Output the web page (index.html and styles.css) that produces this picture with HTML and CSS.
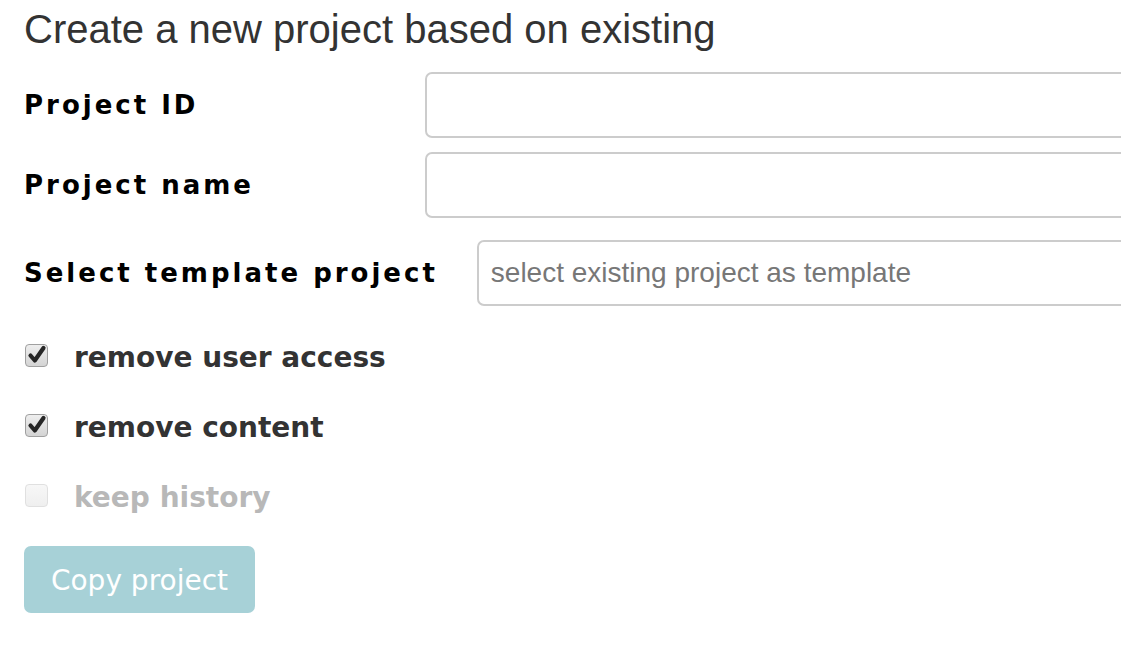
FILE: index.html
```html
<!DOCTYPE html>
<html>
<head>
<meta charset="utf-8">
<link rel="stylesheet" href="styles.css">
</head>
<body>
<div class="page">
  <h1 class="title">Create a new project based on existing</h1>
  <form class="form">
    <div class="field">
      <label class="field-label">Project ID</label>
      <input class="field-input" type="text">
    </div>
    <div class="field field-second">
      <label class="field-label">Project name</label>
      <input class="field-input" type="text">
    </div>
    <div class="field field-template">
      <label class="field-label">Select template project</label>
      <input class="field-input" type="text" placeholder="select existing project as template">
    </div>
    <div class="check-row check-first">
      <span class="checkbox checked"><svg viewBox="0 0 22 22" width="22" height="22"><path d="M4.5 11.5 L8.8 16.5 L17.5 4" fill="none" stroke="#262626" stroke-width="4.2" stroke-linecap="round" stroke-linejoin="round"/></svg></span>
      <span class="check-label">remove user access</span>
    </div>
    <div class="check-row">
      <span class="checkbox checked"><svg viewBox="0 0 22 22" width="22" height="22"><path d="M4.5 11.5 L8.8 16.5 L17.5 4" fill="none" stroke="#262626" stroke-width="4.2" stroke-linecap="round" stroke-linejoin="round"/></svg></span>
      <span class="check-label">remove content</span>
    </div>
    <div class="check-row disabled">
      <span class="checkbox"></span>
      <span class="check-label">keep history</span>
    </div>
    <button class="btn" type="button">Copy project</button>
  </form>
</div>
</body>
</html>
```
FILE: styles.css
```css
html, body {
  margin: 0;
  padding: 0;
  background: #fff;
  overflow: hidden;
}
.page {
  width: 1121px;
  height: 651px;
  overflow: hidden;
  padding-left: 24px;
  box-sizing: border-box;
}
.title {
  margin: 5px 0 0 0;
  font-family: "Liberation Sans", Arial, sans-serif;
  font-weight: normal;
  font-size: 40px;
  line-height: 48px;
  color: #333;
}
.form {
  margin-top: 19px;
}
.field {
  display: flex;
  align-items: center;
  height: 66px;
}
.field-second {
  margin-top: 14px;
}
.field-template {
  margin-top: 22px;
}
.field-label {
  flex: 0 0 auto;
  min-width: 362px;
  margin-right: 39px;
  font-family: "DejaVu Sans", Verdana, sans-serif;
  font-weight: bold;
  font-size: 26px;
  letter-spacing: 3px;
  color: #000;
}
.field-input {
  flex: 0 0 auto;
  width: 900px;
  height: 66px;
  box-sizing: border-box;
  border: 2px solid #ccc;
  border-radius: 7px;
  padding: 0 12px;
  font-family: "Liberation Sans", Arial, sans-serif;
  font-size: 28px;
  color: #555;
  background: #fff;
  outline: none;
}
.field-input::placeholder {
  color: #777;
}
.check-row {
  display: flex;
  align-items: center;
  height: 40px;
  margin-top: 30px;
}
.check-first {
  margin-top: 31px;
}
.checkbox {
  flex: 0 0 auto;
  width: 23px;
  height: 23px;
  box-sizing: border-box;
  margin-left: 1px;
  margin-right: 26px;
  margin-top: -3px;
  border: 1px solid #a0a0a0;
  border-radius: 4px;
  background: linear-gradient(#eeeeee, #d4d4d4);
  position: relative;
}
.checkbox svg {
  position: absolute;
  left: 0;
  top: -1px;
}
.disabled .checkbox {
  border-color: #e0e0e0;
  background: linear-gradient(#f7f7f7, #efefef);
}
.check-label {
  font-family: "DejaVu Sans", Verdana, sans-serif;
  font-weight: bold;
  font-size: 28px;
  color: #333;
}
.disabled .check-label {
  color: #b8b8b8;
}
.btn {
  display: block;
  margin-top: 29px;
  width: 231px;
  height: 67px;
  border: none;
  border-radius: 7px;
  background: #a7d1d7;
  color: #fff;
  font-family: "DejaVu Sans", Verdana, sans-serif;
  font-size: 28px;
  padding: 2px 0 0 0;
}
```
